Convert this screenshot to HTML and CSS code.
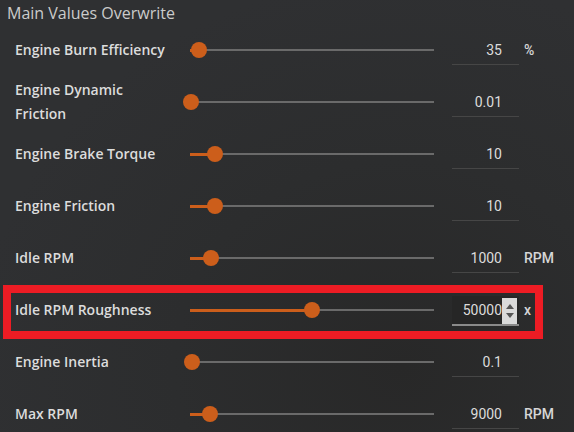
FILE: index.html
```html
<!DOCTYPE html>
<html>
<head>
<meta charset="utf-8">
<link rel="stylesheet" href="styles.css">
</head>
<body>
<div class="panel">
  <div class="title">Main Values Overwrite</div>
  <div class="rows">
    <div class="row">
      <div class="label">Engine Burn Efficiency</div>
      <div class="slider"><div class="track"></div><div class="fill" style="width:3.7%"></div><div class="thumb" style="left:3.7%"></div></div>
      <div class="input"><span class="val">35</span></div>
      <div class="unit">%</div>
    </div>
    <div class="row">
      <div class="label">Engine Dynamic Friction</div>
      <div class="slider"><div class="track"></div><div class="fill" style="width:0.4%"></div><div class="thumb" style="left:0.4%"></div></div>
      <div class="input"><span class="val">0.01</span></div>
      <div class="unit"></div>
    </div>
    <div class="row">
      <div class="label">Engine Brake Torque</div>
      <div class="slider"><div class="track"></div><div class="fill" style="width:10.2%"></div><div class="thumb" style="left:10.2%"></div></div>
      <div class="input"><span class="val">10</span></div>
      <div class="unit"></div>
    </div>
    <div class="row">
      <div class="label">Engine Friction</div>
      <div class="slider"><div class="track"></div><div class="fill" style="width:10.2%"></div><div class="thumb" style="left:10.2%"></div></div>
      <div class="input"><span class="val">10</span></div>
      <div class="unit"></div>
    </div>
    <div class="row">
      <div class="label">Idle RPM</div>
      <div class="slider"><div class="track"></div><div class="fill" style="width:8.6%"></div><div class="thumb" style="left:8.6%"></div></div>
      <div class="input"><span class="val">1000</span></div>
      <div class="unit">RPM</div>
    </div>
    <div class="row highlighted">
      <div class="label">Idle RPM Roughness</div>
      <div class="slider"><div class="track"></div><div class="fill" style="width:50%"></div><div class="thumb" style="left:50%"></div></div>
      <div class="input focused"><span class="val">50000</span>
        <div class="spin"><span class="up"></span><span class="down"></span></div>
      </div>
      <div class="unit">x</div>
      <div class="mark"></div>
    </div>
    <div class="row">
      <div class="label">Engine Inertia</div>
      <div class="slider"><div class="track"></div><div class="fill" style="width:0.8%"></div><div class="thumb" style="left:0.8%"></div></div>
      <div class="input"><span class="val">0.1</span></div>
      <div class="unit"></div>
    </div>
    <div class="row">
      <div class="label">Max RPM</div>
      <div class="slider"><div class="track"></div><div class="fill" style="width:8.2%"></div><div class="thumb" style="left:8.2%"></div></div>
      <div class="input"><span class="val">9000</span></div>
      <div class="unit">RPM</div>
    </div>
  </div>
</div>
</body>
</html>
```
FILE: styles.css
```css
html, body {
  margin: 0;
  padding: 0;
  width: 574px;
  height: 432px;
  overflow: hidden;
  background: #2e2f31;
}
.panel {
  width: 574px;
  height: 432px;
  background: radial-gradient(ellipse at 70% 85%, #282828 0%, #2c2d2e 40%, #2f3032 75%);
}
.title {
  padding: 3px 7px 0;
  line-height: 21px;
  font-family: "Open Sans", sans-serif;
  font-size: 16px;
  color: #cbcbcb;
}
.rows {
  display: flex;
  flex-direction: column;
}
.row {
  position: relative;
  height: 52px;
  display: flex;
  align-items: center;
  padding-left: 15px;
}
.label {
  width: 160px;
  font-family: "Open Sans", sans-serif;
  font-weight: 600;
  font-size: 14px;
  line-height: 24px;
  color: #dcdcdc;
}
.slider {
  position: relative;
  margin-left: 15px;
  width: 244px;
  height: 16px;
}
.track {
  position: absolute;
  left: 0;
  right: 0;
  top: 7px;
  height: 2px;
  background: #6a6a6a;
}
.fill {
  position: absolute;
  left: 0;
  top: 7px;
  height: 3px;
  margin-top: -0.5px;
  background: #cc5e1b;
}
.thumb {
  position: absolute;
  top: 0;
  width: 16px;
  height: 16px;
  margin-left: -8px;
  border-radius: 50%;
  background: #cc5e1b;
}
.input {
  position: relative;
  margin-left: 18px;
  width: 67px;
  height: 28px;
  border-bottom: 1px solid #464646;
  box-sizing: content-box;
  display: flex;
  align-items: center;
  justify-content: flex-end;
  padding-right: 0;
  margin-top: 1px;
}
.val {
  padding-right: 17px;
  font-family: Roboto, sans-serif;
  font-size: 14px;
  color: #dcdcdc;
}
.input.focused {
  background: #262626;
  border-bottom: 2px solid #8a8a8a;
  height: 28px;
  margin-top: 2px;
}
.input.focused .val {
  padding-right: 17px;
}
.spin {
  position: absolute;
  right: 2px;
  top: 2px;
  bottom: 0;
  width: 15px;
  background: #dadada;
  display: flex;
  flex-direction: column;
  align-items: center;
  justify-content: center;
  gap: 4px;
}
.spin .up {
  width: 0;
  height: 0;
  border-left: 4px solid transparent;
  border-right: 4px solid transparent;
  border-bottom: 5px solid #555;
}
.spin .down {
  width: 0;
  height: 0;
  border-left: 4px solid transparent;
  border-right: 4px solid transparent;
  border-top: 5px solid #555;
}
.unit {
  margin-left: 5px;
  font-family: Roboto, sans-serif;
  font-weight: 500;
  font-size: 14px;
  color: #d6d6d6;
}
.mark {
  position: absolute;
  left: 3px;
  top: 1px;
  width: 524px;
  height: 38px;
  border: 8px solid #ed1c24;
}
```
